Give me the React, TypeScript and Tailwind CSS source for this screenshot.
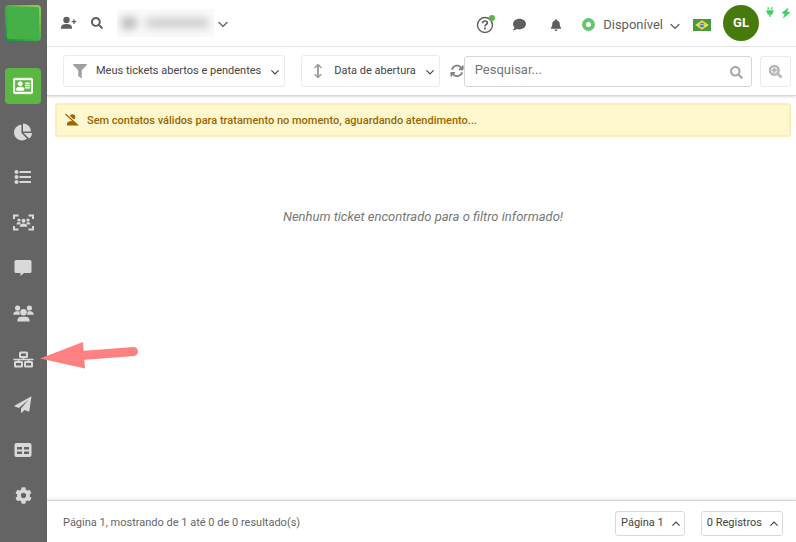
import React from 'react';
import { FaBell, FaChartPie, FaCog, FaComment, FaFilter, FaPlug, FaRegAddressCard, FaSearch, FaSearchPlus } from 'react-icons/fa';
import { FaArrowsRotate } from 'react-icons/fa6';

type IconProps = { className?: string };

const MessageIcon = ({ className }: IconProps) => (
  <svg viewBox="0 0 18 18" className={className} fill="currentColor">
    <path d="M2 1h14a1.500 1.500 0 0 1 1.500 1.500v10a1.500 1.500 0 0 1-1.500 1.500H10l-3.500 3V14H2A1.500 1.500 0 0 1 .5 12.500v-10A1.500 1.500 0 0 1 2 1z" />
  </svg>
);

const ListIcon = ({ className }: IconProps) => (
  <svg viewBox="0 0 18 16" className={className} fill="currentColor">
    <circle cx="2.500" cy="3" r="2" />
    <circle cx="2.500" cy="8" r="2" />
    <circle cx="2.500" cy="13" r="2" />
    <path d="M5.500 2h11.500v2H5.500zM5.500 7h11.500v2H5.500zM5.500 12h11.500v2H5.500z" />
  </svg>
);

const TeamFocusIcon = ({ className }: IconProps) => (
  <svg viewBox="0 0 21 17" className={className} fill="currentColor">
    <path d="M1 5V1.500h4.500M15.500 1.500H20V5M20 12v3.500h-4.500M5.500 15.500H1V12" fill="none" stroke="currentColor" strokeWidth="2" />
    <circle cx="6" cy="6" r="1.600" />
    <circle cx="15" cy="6" r="1.600" />
    <circle cx="10.500" cy="6.700" r="2" />
    <path d="M3.500 10.500c0-1.700 1-2.300 2.500-2.300 1 0 1.600.2 2 .8-.6.400-1 .9-1.200 1.500zM17.500 10.500c0-1.700-1-2.300-2.500-2.300-1 0-1.600.2-2 .8.600.4 1 .9 1.200 1.500zM6.700 12.800c0-2.200 1.300-3.200 3.800-3.200s3.800 1 3.800 3.200z" />
  </svg>
);

const UsersIcon = ({ className }: IconProps) => (
  <svg viewBox="0 0 21 17" className={className} fill="currentColor">
    <circle cx="4.600" cy="3" r="2.600" />
    <circle cx="16.400" cy="3" r="2.600" />
    <circle cx="10.500" cy="7.200" r="3.300" />
    <path d="M.3 9.800C.3 7.500 1.600 6.300 3.800 6.300h1.400c.5 0 .9.100 1.300.3-.2 1.200 0 2.300.6 3.200zM20.700 9.800c0-2.300-1.300-3.500-3.500-3.500h-1.400c-.5 0-.9.100-1.300.3.200 1.200 0 2.300-.6 3.200zM4.300 16.500c0-3.300 1.600-4.700 4.200-4.700h4c2.600 0 4.200 1.400 4.200 4.700z" />
  </svg>
);

const NetworkIcon = ({ className }: IconProps) => (
  <svg viewBox="0 0 21 17" className={className} fill="none" stroke="currentColor" strokeWidth="2">
    <rect x="7" y="1.500" width="7" height="4.500" rx=".5" />
    <rect x="2" y="11" width="7" height="4.500" rx=".5" />
    <rect x="12" y="11" width="7" height="4.500" rx=".5" />
    <path d="M.5 8.500h20M10.500 6v2.500M5.500 8.500V11M15.500 8.500V11" strokeWidth="1.600" />
  </svg>
);

const PlaneIcon = ({ className }: IconProps) => (
  <svg viewBox="0 0 18 17" className={className} fill="currentColor">
    <path d="M17.500.3L.8 9.400c-.5.3-.4.9.1 1.100l3.900 1.500L14.500 3.700l-7.500 8.800v3.700c0 .6.700.8 1.100.4l2.300-2.600 3.900 1.600c.4.200.9-.1 1-.5z" />
  </svg>
);

const TableIcon = ({ className }: IconProps) => (
  <svg viewBox="0 0 18 18" className={className} fill="currentColor">
    <path
      fillRule="evenodd"
      d="M2.500 2h13a2 2 0 0 1 2 2v10a2 2 0 0 1-2 2h-13a2 2 0 0 1-2-2V4a2 2 0 0 1 2-2zM3 6v2.500h5V6zM10 6v2.500h5V6zM3 10.500V13h5v-2.500zM10 10.500V13h5v-2.500z"
    />
  </svg>
);

const UserAddIcon = ({ className }: IconProps) => (
  <svg viewBox="0 0 16 14" className={className} fill="currentColor">
    <circle cx="5.500" cy="4" r="3.200" />
    <path d="M0 12.700v-1.400c0-2.100 2-3.300 5.500-3.300s5.500 1.200 5.500 3.300v1.400z" />
    <path d="M13 3.300v4.600M10.700 5.600h4.600" stroke="currentColor" strokeWidth="1.300" />
  </svg>
);

const UserOffIcon = ({ className }: IconProps) => (
  <svg viewBox="0 0 14 14" className={className} fill="currentColor">
    <circle cx="7.500" cy="4" r="2.800" />
    <path d="M2 12.500v-1.500c0-2 2-3 5-3s5 1 5 3v1.500z" />
    <path d="M1.500.5l12 11.500" stroke="#fff8cf" strokeWidth="1.400" />
    <path d="M.5 1l12.500 11.500" stroke="currentColor" strokeWidth="1.100" />
  </svg>
);

const HelpIcon = ({ className }: IconProps) => (
  <svg viewBox="0 0 18 18" className={className} fill="none" stroke="currentColor">
    <circle cx="9" cy="9" r="7.500" strokeWidth="1.400" />
    <path d="M6.700 7.200C6.700 5.700 7.700 5 9 5s2.300.8 2.300 2c0 1.600-2.300 1.500-2.300 3.400" strokeWidth="1.700" />
    <path d="M9 11.600v1.800" strokeWidth="1.800" />
  </svg>
);

const SortIcon = ({ className }: IconProps) => (
  <svg viewBox="0 0 14 14" className={className} fill="none" stroke="currentColor" strokeLinecap="round" strokeLinejoin="round">
    <path d="M7 1.500v11" strokeWidth="2" />
    <path d="M4 3.500l3-3 3 3M4 10.500l3 3 3-3" strokeWidth="1.500" />
  </svg>
);

const BoltIcon = ({ className }: IconProps) => (
  <svg viewBox="0 0 10 12" className={className} fill="currentColor">
    <path d="M7.500.5L.5 6l3.200.9L1.800 11.500 9.500 5.500 6.200 4.600z" />
  </svg>
);

const Chevron = ({ className }: IconProps) => (
  <svg viewBox="0 0 10 10" className={className} fill="none" stroke="currentColor" strokeLinecap="round">
    <path d="M1.700 3.700L5 7l3.300-3.300" strokeWidth="1.100" />
  </svg>
);

const BrazilFlag = () => (
  <svg viewBox="0 0 18 12" className="w-[18px] h-3" role="img" aria-label="Português">
    <rect width="18" height="12" fill="#479b3e" />
    <path d="M9 1.200l6.800 4.800L9 10.800 2.200 6z" fill="#ffd83b" />
    <circle cx="9" cy="6" r="2.400" fill="#3f83d0" />
    <path d="M6.800 5.300c1.800-.3 3.400.1 4.500 1.400" fill="none" stroke="#fff" strokeWidth=".7" />
  </svg>
);

const menuItems = [
  { label: 'Tickets', icon: FaRegAddressCard, size: 'size-5 stroke-[16px]', active: true },
  { label: 'Relatórios', icon: FaChartPie, size: 'size-[18px]' },
  { label: 'Listas', icon: ListIcon, size: 'w-[18px] h-4' },
  { label: 'Monitoramento', icon: TeamFocusIcon, size: 'w-[21px] h-[17px]' },
  { label: 'Mensagens', icon: MessageIcon, size: 'size-[18px]' },
  { label: 'Contatos', icon: UsersIcon, size: 'w-[21px] h-[17px]' },
  { label: 'Organização', icon: NetworkIcon, size: 'w-[21px] h-[17px]' },
  { label: 'Campanhas', icon: PlaneIcon, size: 'w-[18px] h-[17px]' },
  { label: 'Tabelas', icon: TableIcon, size: 'size-[18px]' },
  { label: 'Configurações', icon: FaCog, size: 'size-[17px]' },
];

const Sidebar = () => (
  <aside className="w-[47px] shrink-0 bg-[#646464] flex flex-col items-start pl-[5px] pt-[5px] pb-7">
    {/* Logo */}
    <a
      href="#"
      aria-label="Início"
      className="size-9 shrink-0 rounded-sm bg-linear-to-bl from-[#9ccc52] via-[#46b048] to-[#07924a] p-0.5"
    >
      <span className="block size-full rounded-xs bg-[#46b048]" />
    </a>

    <nav className="mt-[27px] flex-1 flex flex-col justify-between">
      {menuItems.map(({ label, icon: Icon, size, active }) => (
        <button
          key={label}
          aria-label={label}
          className={`size-9 rounded flex items-center justify-center ${
            active ? 'bg-[#5cb643] text-white' : 'text-[#d9d9d9]'
          }`}
        >
          <Icon className={size} />
        </button>
      ))}
    </nav>
  </aside>
);

const Header = () => (
  <header className="h-[47px] shrink-0 border-b border-[#e8e8e8] flex items-center justify-between pl-[14px] pr-[5px] text-[#5f5f5f]">
    <div className="flex items-center">
      <button aria-label="Adicionar contato">
        <UserAddIcon className="w-4 h-[14px]" />
      </button>
      <button aria-label="Buscar" className="ml-[14px]">
        <FaSearch className="size-3" />
      </button>
      <button aria-label="Conta" className="ml-[14px] flex items-center">
        <span className="w-[97px] h-7 bg-[#fafafa] overflow-hidden flex items-center gap-2 pl-1">
          <span className="w-4 h-3 rounded-full bg-[#b4b4b4] blur-xs" />
          <span className="w-16 h-2.5 rounded-full bg-[#cccccc] blur-xs" />
        </span>
        <Chevron className="size-3 mt-0.5 ml-[3px]" />
      </button>
    </div>

    <div className="flex items-center">
      <div className="flex items-center pt-[3px]">
        <button aria-label="Ajuda" className="relative mr-[19px]">
          <HelpIcon className="size-[18px]" />
          <span className="absolute -top-px -right-px size-1.5 rounded-full bg-[#5cb643]" />
        </button>
        <button aria-label="Conversas" className="mr-6">
          <FaComment className="size-[13px]" />
        </button>
        <button aria-label="Notificações" className="mr-5">
          <FaBell className="size-3" />
        </button>
        <button className="flex items-center text-[13px]">
          <span className="size-[13px] rounded-full border-4 border-[#69c574] bg-white mr-2" />
          Disponível
          <Chevron className="size-3 mt-0.5 ml-1.5" />
        </button>
        <button aria-label="Idioma" className="ml-3">
          <BrazilFlag />
        </button>
      </div>
      <button className="size-9 ml-3 rounded-full bg-[#467a0b] text-white text-[13px] font-bold">GL</button>
      <div className="flex self-start gap-1.5 ml-1.5 mt-0.5 text-[#3bd15c]">
        <FaPlug className="size-2.5" />
        <BoltIcon className="w-2.5 h-3" />
      </div>
    </div>
  </header>
);

const Toolbar = () => (
  <div className="h-[49px] shrink-0 border-b border-[#d8d8d8] shadow-sm flex items-center pl-4 pr-[5px] text-[11px] text-[#444444]">
    <button className="h-8 rounded-[3px] border border-[#ebebeb] flex items-center pl-[9px] pr-1 whitespace-nowrap">
      <FaFilter className="size-[14px] mr-[9px] text-[#a0a0a0]" />
      <span className="pt-px">Meus tickets abertos e pendentes</span>
      <Chevron className="size-2.5 mt-0.5 ml-[9px]" />
    </button>
    <button className="h-8 ml-4 rounded-[3px] border border-[#ebebeb] flex items-center pl-[9px] pr-1 whitespace-nowrap">
      <SortIcon className="size-[14px] mr-[9px] text-[#a0a0a0]" />
      <span className="pt-px">Data de abertura</span>
      <Chevron className="size-2.5 mt-0.5 ml-[9px]" />
    </button>
    <button aria-label="Atualizar" className="ml-2.5 text-[#808080]">
      <FaArrowsRotate className="size-[14px]" />
    </button>
    <div className="h-[31px] flex-1 min-w-0 rounded-[3px] border border-[#d6d6d6] flex items-center pl-2.5 pr-2">
      <input
        type="text"
        aria-label="Pesquisar"
        placeholder="Pesquisar..."
        className="flex-1 min-w-0 pb-0.5 text-[13px] outline-none placeholder:text-[#757575]"
      />
      <button aria-label="Pesquisar" className="pt-0.5 text-[#a8a8a8]">
        <FaSearch className="size-[13px]" />
      </button>
    </div>
    <button
      aria-label="Pesquisa avançada"
      className="size-[31px] ml-2 rounded-[3px] border border-[#ebebeb] flex items-center justify-center text-[#b5b5b5]"
    >
      <FaSearchPlus className="size-[13px] stroke-[24px]" />
    </button>
  </div>
);

const Footer = () => (
  <footer className="h-[42px] shrink-0 border-t border-[#d8d8d8] shadow-[0_-1px_3px_rgba(0,0,0,0.1)] flex items-center justify-between pt-1 pl-4 pr-[13px] text-[11px] text-[#666666]">
    <span>Página 1, mostrando de 1 até 0 de 0 resultado(s)</span>
    <div className="flex gap-4 text-[#444444]">
      <button className="h-[25px] rounded-[3px] border border-[#d9d9d9] flex items-center pl-[5px] pr-[3px]">
        Página 1
        <Chevron className="size-2.5 ml-[7px] rotate-180" />
      </button>
      <button className="h-[25px] rounded-[3px] border border-[#d9d9d9] flex items-center pl-[5px] pr-[3px]">
        0 Registros
        <Chevron className="size-2.5 ml-[7px] rotate-180" />
      </button>
    </div>
  </footer>
);

const App = () => {
  return (
    <div className="relative min-h-screen flex bg-white font-[Roboto,sans-serif]">
      <Sidebar />

      <div className="flex-1 min-w-0 flex flex-col">
        <Header />
        <Toolbar />

        <main className="flex-1 pt-[7px] pl-2 pr-[5px]">
          {/* Warning */}
          <div className="h-[34px] rounded-[3px] border-2 border-[#ffecb9] bg-[#fff8cf] flex items-center pl-2 text-[11px] font-medium text-[#996600]">
            <UserOffIcon className="size-[14px] mr-2" />
            <span className="pt-0.5">Sem contatos válidos para tratamento no momento, aguardando atendimento...</span>
          </div>

          <p className="mt-[70px] text-center text-[13px] italic text-[#777777]">
            Nenhum ticket encontrado para o filtro informado!
          </p>
        </main>

        <Footer />
      </div>

      {/* Arrow pointing at the organization menu */}
      <svg viewBox="0 0 100 30" className="absolute left-[39px] top-[341px] w-[100px] h-[30px]" aria-hidden="true">
        <path d="M1 17.500L44 1l2 26.500z" fill="#ff8080" />
        <path d="M43 14.500L94.500 10.500" stroke="#ff8080" strokeWidth="9" strokeLinecap="round" />
      </svg>
    </div>
  );
};

export default App;
